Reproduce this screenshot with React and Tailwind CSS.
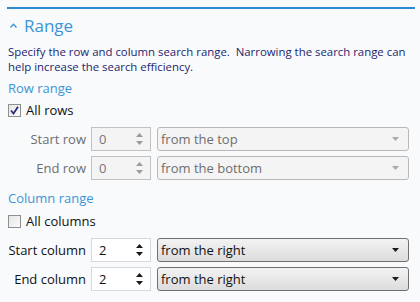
import React from "react";

function Spin({ disabled }) {
  const c = disabled ? "#9a9a9a" : "#1a1a1a";
  return (
    <svg width="7" height="14" viewBox="0 0 7 14" className="shrink-0">
      <path d="M3.5 1 L7 5 L0 5 Z" fill={c} />
      <path d="M0 9 L7 9 L3.5 13 Z" fill={c} />
    </svg>
  );
}

function NumBox({ value, disabled }) {
  return (
    <div
      className={
        "w-[60px] h-[24px] flex items-center justify-between pl-[7px] pr-[7px] border " +
        (disabled ? "bg-[#f4f4f4] border-[#c2c2c2] text-[#767676]" : "bg-white border-[#d5d9de] text-[#111]")
      }
    >
      <span>{value}</span>
      <Spin disabled={disabled} />
    </div>
  );
}

function Select({ value, disabled }) {
  return (
    <div
      className={
        "w-[252px] h-[24px] flex items-center justify-between pl-[3px] pr-[9px] rounded-[3px] border " +
        (disabled
          ? "bg-[#f4f4f4] border-[#b9b9b9] text-[#6e6e6e]"
          : "bg-gradient-to-b from-[#f3f3f3] to-[#dcdcdc] border-[#707070] text-[#111]")
      }
    >
      <span>{value}</span>
      <svg width="7" height="4" viewBox="0 0 7 4">
        <path d="M0 0 L7 0 L3.5 4 Z" fill={disabled ? "#aaaaaa" : "#1a1a1a"} />
      </svg>
    </div>
  );
}

function Check({ checked }) {
  return (
    <div className="w-[13px] h-[13px] border border-[#8e8f8f] bg-gradient-to-br from-[#e6e6e6] to-[#fafafa] flex items-center justify-center">
      {checked && (
        <svg width="9" height="9" viewBox="0 0 9 9">
          <path d="M1 4.5 L3.5 7.5 L8 0.8" stroke="#2b2b7a" strokeWidth="1.8" fill="none" />
        </svg>
      )}
    </div>
  );
}

function Row({ label, value, sel, disabled }) {
  return (
    <div className="flex items-center h-[24px]">
      <div className={"w-[91px] text-right pr-[5px]" + (disabled ? " text-[#6e6e6e]" : " text-[#111]")}>
        {label}
      </div>
      <NumBox value={value} disabled={disabled} />
      <div className="w-[6px]" />
      <Select value={sel} disabled={disabled} />
    </div>
  );
}

export default function App() {
  return (
    <div
      className="w-[420px] h-[302px] bg-[#f9fafc] pt-[7px] text-[13px] leading-none"
      style={{ fontFamily: '"Segoe UI", "Open Sans", "Liberation Sans", sans-serif' }}
    >
      <div className="ml-[7px] w-[408px] h-[2px] bg-[#2a8ad4]" />
      <div className="flex items-center h-[24px] mt-[4px] pl-[10px] text-[#3c95d6]">
        <svg width="7" height="5" viewBox="0 0 7 5" className="mr-[7px]">
          <path d="M0.5 4.5 L3.5 1.2 L6.5 4.5" stroke="#3c95d6" strokeWidth="1.3" fill="none" />
        </svg>
        <span className="text-[17px]">Range</span>
      </div>
      <div className="pl-[8px] mt-[7px] text-[11.4px] leading-[15px] text-[#1c1f6e]">
        <div>Specify the row and column search range.&nbsp; Narrowing the search range can</div>
        <div>help increase the search efficiency.</div>
      </div>
      <div className="pl-[8px] mt-[6px] text-[#3c95d6] h-[16px] flex items-center">Row range</div>
      <div className="pl-[8px] mt-[6px] h-[16px] flex items-center gap-[5px] text-[#111]">
        <Check checked />
        <span>All rows</span>
      </div>
      <div className="mt-[9px] flex flex-col gap-[5px]">
        <Row label="Start row" value="0" sel="from the top" disabled />
        <Row label="End row" value="0" sel="from the bottom" disabled />
      </div>
      <div className="pl-[8px] mt-[10px] text-[#3c95d6] h-[16px] flex items-center">Column range</div>
      <div className="pl-[8px] mt-[7px] h-[16px] flex items-center gap-[5px] text-[#111]">
        <Check />
        <span>All columns</span>
      </div>
      <div className="mt-[9px] flex flex-col gap-[5px]">
        <Row label="Start column" value="2" sel="from the right" />
        <Row label="End column" value="2" sel="from the right" />
      </div>
    </div>
  );
}
